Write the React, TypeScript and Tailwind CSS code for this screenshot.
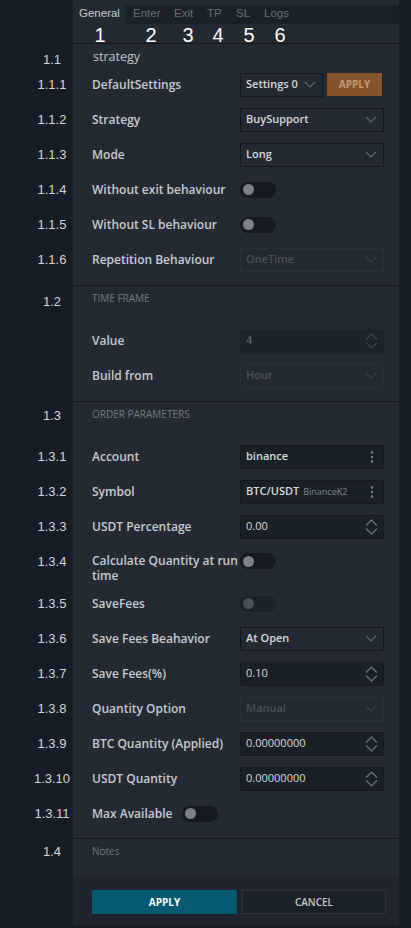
import React from "react"

const SANS = "font-['Open_Sans','Noto_Sans',sans-serif]"
const ANN = "font-['Liberation_Sans',Arial,sans-serif]"

function Ann({ children, top }: { children?: React.ReactNode; top?: string }) {
  return (
    <div className={`w-[73px] shrink-0 flex ${top ? `items-start ${top}` : "items-center"}`}>
      <span className={`ml-[31px] w-[44px] text-center text-[13px] leading-[15px] text-[#d3d7db] ${ANN}`}>{children}</span>
    </div>
  )
}

function Line({ ann, annTop, className, children }: { ann?: string; annTop?: string; className: string; children?: React.ReactNode }) {
  return (
    <div className="flex">
      <Ann top={annTop}>{ann}</Ann>
      <div className={`w-[326px] shrink-0 ${className}`}>{children}</div>
    </div>
  )
}

function Chevron({ dim }: { dim?: boolean }) {
  return (
    <svg width="12" height="7" viewBox="0 0 12 7" fill="none" stroke={dim ? "#3a4149" : "#626973"} strokeWidth="1.2">
      <path d="M1 1l5 5 5-5" />
    </svg>
  )
}

function Spinner({ dim }: { dim?: boolean }) {
  return (
    <svg width="13" height="18" viewBox="0 0 13 18" fill="none" stroke={dim ? "#3d444c" : "#6f767f"} strokeWidth="1.2">
      <path d="M1 7.5L6.5 2 12 7.5" />
      <path d="M1 10.5L6.5 16 12 10.5" />
    </svg>
  )
}

function Kebab() {
  return (
    <svg width="4" height="12" viewBox="0 0 4 12" fill="#7d848c">
      <circle cx="2" cy="1.5" r="1.2" />
      <circle cx="2" cy="6" r="1.2" />
      <circle cx="2" cy="10.5" r="1.2" />
    </svg>
  )
}

function Select({ value, dim, narrow }: { value: string; dim?: boolean; narrow?: boolean }) {
  return (
    <div
      className={`${narrow ? "w-[83px]" : "w-[144px]"} h-[24px] flex items-center justify-between pl-[5px] pr-[6px] border text-[11px] font-semibold ${
        dim ? "border-[#2b3139] text-[#4a515a]" : "border-[#13171c] text-[#d6dadf]"
      }`}
    >
      <span>{value}</span>
      <Chevron dim={dim} />
    </div>
  )
}

function NumberBox({ value, dim }: { value: string; dim?: boolean }) {
  return (
    <div
      className={`w-[144px] h-[24px] flex items-center justify-between pl-[5px] pr-[5px] border text-[11px] ${
        dim ? "bg-[#1d232b] border-[#1d232b] text-[#59606a] font-semibold" : "bg-[#1a2028] border-[#151a20] text-[#d6dadf]"
      }`}
    >
      <span>{value}</span>
      <Spinner dim={dim} />
    </div>
  )
}

function TextBox({ children }: { children: React.ReactNode }) {
  return (
    <div className="w-[144px] h-[24px] flex items-center justify-between pl-[5px] pr-[9px] border bg-[#1a2028] border-[#151a20] text-[11px] font-semibold text-[#d6dadf]">
      <span className="flex items-baseline gap-[4px]">{children}</span>
      <Kebab />
    </div>
  )
}

function Toggle({ dim }: { dim?: boolean }) {
  return (
    <div className={`w-[36px] h-[16px] rounded-full flex items-center pl-[3px] ${dim ? "bg-[#1c2229]" : "bg-[#151a21]"}`}>
      <div className={`w-[11px] h-[11px] rounded-full ${dim ? "bg-[#4b5158]" : "bg-[#7c8188]"}`} />
    </div>
  )
}

function Field({ ann, label, children }: { ann: string; label: string; children: React.ReactNode }) {
  return (
    <Line ann={ann} className="h-[35px] bg-[#242a33] flex items-center pl-[19px]">
      <div className="w-[148px] text-[12px] leading-[15px] font-semibold text-[#c6cbd1]">{label}</div>
      {children}
    </Line>
  )
}

function Divider() {
  return <Line className="h-px bg-[#141920]" />
}

function Gap({ h }: { h: string }) {
  return <Line className={`${h} bg-[#242a33]`} />
}

function Header({ ann, label, h, pt, annTop }: { ann: string; label: string; h: string; pt: string; annTop: string }) {
  return (
    <Line ann={ann} annTop={annTop} className={`${h} ${pt} bg-[#242a33] pl-[19px]`}>
      <div className="text-[10px] leading-[14px] uppercase text-[#727983]">{label}</div>
    </Line>
  )
}

export default function App() {
  return (
    <div className={`w-[411px] h-[928px] bg-[#161d26] overflow-hidden ${SANS}`}>
      {/* tabs */}
      <Line className="h-[24px] pt-[5px] bg-[#242a33] flex">
        <div className={`w-[53px] pl-[6px] text-[11.5px] leading-[17px] text-[#c8cdd2] ${ANN}`}>General</div>
        <div className={`flex-1 flex bg-[#1b2129] text-[11.5px] leading-[17px] text-[#69707a] ${ANN}`}>
          <span className="w-[41px] pl-[7px]">Enter</span>
          <span className="w-[33px] pl-[7px]">Exit</span>
          <span className="w-[29px] pl-[7px]">TP</span>
          <span className="w-[28px] pl-[7px]">SL</span>
          <span className="pl-[7px]">Logs</span>
        </div>
      </Line>
      <Line className={`h-[19px] bg-[#242a33] flex text-[20px] leading-[23px] text-white ${ANN}`}>
        <span className="ml-[21px] w-[12px] text-center">1</span>
        <span className="ml-[39px] w-[12px] text-center">2</span>
        <span className="ml-[25px] w-[12px] text-center">3</span>
        <span className="ml-[18px] w-[12px] text-center">4</span>
        <span className="ml-[19px] w-[12px] text-center">5</span>
        <span className="ml-[19px] w-[12px] text-center">6</span>
      </Line>
      <Divider />

      {/* 1.1 strategy */}
      <Line ann="1.1" annTop="pt-[8px]" className="h-[23px] pt-[4px] bg-[#242a33] pl-[20px]">
        <div className="text-[12.5px] leading-[17px] text-[#c0c5cc]">strategy</div>
      </Line>
      <Field ann="1.1.1" label="DefaultSettings">
        <Select value="Settings 0" narrow />
        <div className="ml-[4px] w-[55px] h-[23px] bg-[#87532b] flex items-center justify-center text-[10px] font-bold text-[#c29a76]">APPLY</div>
      </Field>
      <Field ann="1.1.2" label="Strategy">
        <Select value="BuySupport" />
      </Field>
      <Field ann="1.1.3" label="Mode">
        <Select value="Long" />
      </Field>
      <Field ann="1.1.4" label="Without exit behaviour">
        <Toggle />
      </Field>
      <Field ann="1.1.5" label="Without SL behaviour">
        <Toggle />
      </Field>
      <Field ann="1.1.6" label="Repetition Behaviour">
        <Select value="OneTime" dim />
      </Field>
      <Gap h="h-[8px]" />
      <Divider />

      {/* 1.2 time frame */}
      <Header ann="1.2" label="Time Frame" h="h-[37px]" pt="pt-[5px]" annTop="pt-[8px]" />
      <Field ann="" label="Value">
        <NumberBox value="4" dim />
      </Field>
      <Field ann="" label="Build from">
        <Select value="Hour" dim />
      </Field>
      <Gap h="h-[8px]" />
      <Divider />

      {/* 1.3 order parameters */}
      <Header ann="1.3" label="Order Parameters" h="h-[37px]" pt="pt-[5px]" annTop="pt-[6px]" />
      <Field ann="1.3.1" label="Account">
        <TextBox>binance</TextBox>
      </Field>
      <Field ann="1.3.2" label="Symbol">
        <TextBox>
          BTC/USDT<span className="text-[9px] font-normal text-[#80878f]">BinanceK2</span>
        </TextBox>
      </Field>
      <Field ann="1.3.3" label="USDT Percentage">
        <NumberBox value="0.00" />
      </Field>
      <Line ann="1.3.4" annTop="pt-[10px]" className="h-[42px] bg-[#242a33] flex items-start pl-[19px]">
        <div className="w-[148px] pt-[10px] text-[12px] leading-[14.5px] font-semibold text-[#c6cbd1]">Calculate Quantity at run time</div>
        <div className="pt-[9px]">
          <Toggle />
        </div>
      </Line>
      <Field ann="1.3.5" label="SaveFees">
        <Toggle dim />
      </Field>
      <Field ann="1.3.6" label="Save Fees Beahavior">
        <Select value="At Open" />
      </Field>
      <Field ann="1.3.7" label="Save Fees(%)">
        <NumberBox value="0.10" />
      </Field>
      <Field ann="1.3.8" label="Quantity Option">
        <Select value="Manual" dim />
      </Field>
      <Field ann="1.3.9" label="BTC Quantity (Applied)">
        <NumberBox value="0.00000000" />
      </Field>
      <Field ann="1.3.10" label="USDT Quantity">
        <NumberBox value="0.00000000" />
      </Field>
      <Line ann="1.3.11" className="h-[35px] bg-[#242a33] flex items-center pl-[19px] gap-[10px]">
        <div className="text-[12px] leading-[15px] font-semibold text-[#c6cbd1]">Max Available</div>
        <Toggle />
      </Line>
      <Gap h="h-[7px]" />
      <Divider />

      {/* 1.4 notes */}
      <Line ann="1.4" annTop="pt-[5px]" className="h-[38px] pt-[5px] bg-[#242a33] pl-[19px]">
        <div className="text-[10px] leading-[14px] text-[#6d747d]">Notes</div>
      </Line>

      {/* footer */}
      <Line className="h-[48px] pt-[13px] bg-[#20252d] pl-[19px] flex gap-[5px]">
        <div className="w-[145px] h-[24px] bg-[#045a72] flex items-center justify-center text-[10px] font-bold text-white">APPLY</div>
        <div className="w-[144px] h-[24px] bg-[#1b2129] border border-[#2d343d] flex items-center justify-center text-[10px] font-semibold text-[#c3c8ce]">CANCEL</div>
      </Line>
    </div>
  )
}
